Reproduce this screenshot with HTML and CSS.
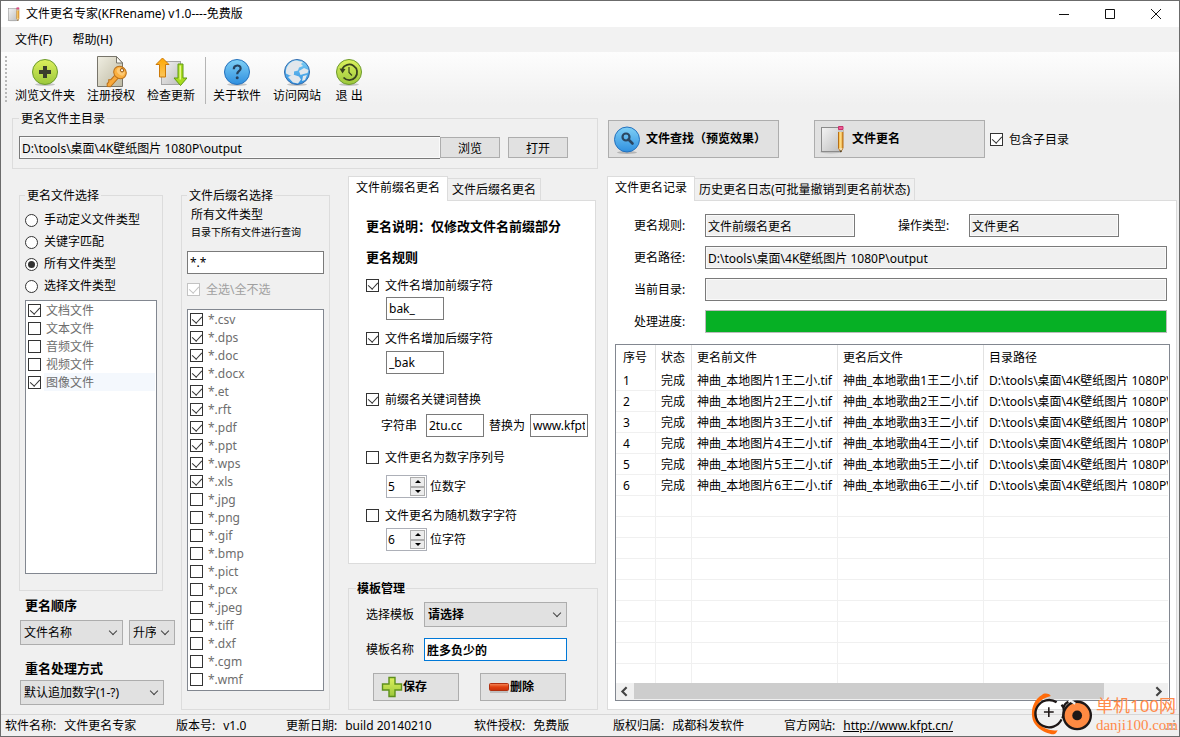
FILE: index.html
```html
<!DOCTYPE html>
<html lang="zh-CN">
<head>
<meta charset="utf-8">
<title>文件更名专家(KFRename) v1.0----免费版</title>
<link rel="stylesheet" href="styles.css">
</head>
<body>
<svg class="defs" aria-hidden="true">
  <defs>
    <linearGradient id="green" x1="0" y1="0" x2="0" y2="1"><stop offset="0" stop-color="#dcf05c"/><stop offset="1" stop-color="#9cc83c"/></linearGradient>
    <linearGradient id="blue" x1="0" y1="0" x2="0" y2="1"><stop offset="0" stop-color="#7fd0f6"/><stop offset="1" stop-color="#2f8fdf"/></linearGradient>
    <linearGradient id="paper" x1="0" y1="0" x2="1" y2="1"><stop offset="0" stop-color="#f4f4f4"/><stop offset="1" stop-color="#bdbdbd"/></linearGradient>
    <linearGradient id="cream" x1="0" y1="0" x2="1" y2="1"><stop offset="0" stop-color="#f0eee2"/><stop offset="1" stop-color="#bdb9a2"/></linearGradient>
    <linearGradient id="orange" x1="0" y1="0" x2="0" y2="1"><stop offset="0" stop-color="#ffa800"/><stop offset="1" stop-color="#fbc55c"/></linearGradient>
    <linearGradient id="wood" x1="0" y1="0" x2="1" y2="0"><stop offset="0" stop-color="#f8b030"/><stop offset=".5" stop-color="#ffe08a"/><stop offset="1" stop-color="#d9861a"/></linearGradient>
    <linearGradient id="red" x1="0" y1="0" x2="0" y2="1"><stop offset="0" stop-color="#f58a5a"/><stop offset=".5" stop-color="#e0400f"/><stop offset="1" stop-color="#c8300a"/></linearGradient>
    <symbol id="notepad" viewBox="0 0 32 32">
      <ellipse cx="14" cy="29" rx="11" ry="1.500" fill="#000" opacity=".15"/>
      <rect x="4.500" y="4.500" width="20" height="24" fill="url(#paper)" stroke="#8b8b8b"/>
      <path d="M21.500 7h4.500v18l-2.200 4-2.300-4z" fill="url(#wood)" stroke="#b56f16"/>
      <path d="M21.500 3.500h4.500v3h-4.500z" fill="#ef5d94" stroke="#c4326c"/>
      <path d="M21 7h5.500v2h-5.500z" fill="#c6c6c6"/>
      <path d="M22 25l1.800 4 1.800-4z" fill="#f5dfb0"/><path d="M22.800 27.500l1 2 1-2z" fill="#222"/>
    </symbol>
  </defs>
</svg>
<div class="window">
  <header class="titlebar">
    <svg class="app-icon" viewBox="0 0 32 32" aria-hidden="true"><use href="#notepad"/></svg>
    <h1 class="title">文件更名专家(KFRename) v1.0----免费版</h1>
    <div class="win-buttons">
      <button class="win-btn" aria-label="最小化"><svg viewBox="0 0 12 12"><path d="M1 6.500h10"/></svg></button>
      <button class="win-btn" aria-label="最大化"><svg viewBox="0 0 12 12"><path d="M1.500 1.500h9v9h-9z"/></svg></button>
      <button class="win-btn" aria-label="关闭"><svg viewBox="0 0 12 12"><path d="M1 1l10 10M11 1L1 11"/></svg></button>
    </div>
  </header>
  <nav class="menubar">
    <button class="menu">文件(F)</button>
    <button class="menu">帮助(H)</button>
  </nav>
  <div class="toolbar">
    <span class="grip"></span>
    <button class="tool">
      <svg viewBox="0 0 32 32"><ellipse cx="16" cy="28.500" rx="10" ry="1.500" fill="#000" opacity=".2"/><circle cx="16" cy="16" r="12.500" fill="url(#green)" stroke="#6c9a2c"/><path d="M14 10h4v4h4v4h-4v4h-4v-4h-4v-4h4z" fill="#3a3f2c"/></svg>
      <span>浏览文件夹</span>
    </button>
    <button class="tool">
      <svg viewBox="0 0 32 32"><path d="M2.500.5h19l6 6.500v23.500h-25z" fill="url(#cream)" stroke="#77746a"/><path d="M21.500.5V7h6z" fill="#fbfaf4" stroke="#77746a"/><g transform="translate(25 16.500) rotate(42)"><path d="M-2 4h4.500v13l-2.500 2-2-2v-2.500l-1.500-1.500 1.500-1.500z" fill="#f9a93a" stroke="#b9701a"/><ellipse cx="0" cy="0" rx="6.500" ry="6" fill="#fbb040" stroke="#b9701a"/><ellipse cx="0" cy="-1" rx="4.500" ry="3" fill="#ffd68a" opacity=".7"/><circle cx="0" cy="-3" r="1.600" fill="#fff" stroke="#9a5a12"/></g></svg>
      <span>注册授权</span>
    </button>
    <button class="tool">
      <svg viewBox="0 0 32 32"><rect x="6.500" y="5.500" width="19" height="23" fill="url(#paper)" stroke="#a5a5a5"/><path d="M7.500 2l6.500 6.500h-3.500V21h-6V8.500H1z" fill="url(#orange)" stroke="#cc7a0a"/><path d="M23 8h5v14h4l-6.500 7.500L19 22h4z" fill="#a9dc1e" stroke="#5f9a12"/><path d="M24.500 9.500h1.500v14h-1.500z" fill="#e6f88c"/></svg>
      <span>检查更新</span>
    </button>
    <span class="tool-sep"></span>
    <button class="tool">
      <svg viewBox="0 0 32 32"><ellipse cx="16" cy="28.500" rx="10" ry="1.500" fill="#000" opacity=".2"/><circle cx="16" cy="16" r="12.500" fill="url(#blue)" stroke="#2471bd"/><path d="M12.800 13.200c0-4.800 6.800-4.800 6.800-.8 0 2.800-3.400 2.800-3.400 5.800" fill="none" stroke="#27425e" stroke-width="2.200"/><circle cx="16.200" cy="21.800" r="1.500" fill="#27425e"/></svg>
      <span>关于软件</span>
    </button>
    <button class="tool">
      <svg viewBox="0 0 32 32"><ellipse cx="16" cy="28.500" rx="10" ry="1.500" fill="#000" opacity=".2"/><circle cx="16" cy="16" r="12.500" fill="url(#blue)" stroke="#2f69ad"/><path d="M5 14c1-5 5-9 10-9.500l7 1.500-2 2 2 2-4 1.500-1 3-4 1v3l-4 1-4-2zM18 15l5-3 4.500 2-1 3-4 1-3 1zM7 21l5-2.500 6 2 2 3-3 4-5-1zM22 20l4-1-2 5-3 1z" fill="#e2e7ec"/></svg>
      <span>访问网站</span>
    </button>
    <button class="tool">
      <svg viewBox="0 0 32 32"><ellipse cx="16" cy="28.500" rx="10" ry="1.500" fill="#000" opacity=".2"/><circle cx="16" cy="16" r="12.500" fill="url(#green)" stroke="#6c9a2c"/><path d="M9.200 13A7.800 7.800 0 1 1 10.500 21.500" fill="none" stroke="#39421f" stroke-width="1.800"/><path d="M6.500 12.500l6 .5-3 4.500z" fill="#39421f"/><path d="M16 11v5.500l3 3" fill="none" stroke="#39421f" stroke-width="1.200"/></svg>
      <span>退 出</span>
    </button>
  </div>

  <main class="body">
    <section class="left">
      <fieldset class="group dir-group">
        <legend>更名文件主目录</legend>
        <div class="dir-row">
          <input class="box grey dir-input" type="text" aria-label="更名文件主目录" value="D:\tools\桌面\4K壁纸图片 1080P\output" readonly>
          <button class="btn small">浏览</button>
          <button class="btn small spaced">打开</button>
        </div>
      </fieldset>

      <div class="columns">
        <div class="col col-types">
          <fieldset class="group types">
            <legend>更名文件选择</legend>
            <label class="radio-row"><input type="radio" name="type">手动定义文件类型</label>
            <label class="radio-row"><input type="radio" name="type">关键字匹配</label>
            <label class="radio-row"><input type="radio" name="type" checked>所有文件类型</label>
            <label class="radio-row"><input type="radio" name="type">选择文件类型</label>
            <div class="list types-list">
              <label class="item"><input type="checkbox" checked><span>文档文件</span></label>
              <label class="item"><input type="checkbox"><span>文本文件</span></label>
              <label class="item"><input type="checkbox"><span>音频文件</span></label>
              <label class="item"><input type="checkbox"><span>视频文件</span></label>
              <label class="item current"><input type="checkbox" checked><span>图像文件</span></label>
            </div>
          </fieldset>
          <h2 class="heading order-heading">更名顺序</h2>
          <div class="order-row">
            <span class="combo order-name"><select aria-label="排序字段"><option>文件名称</option></select></span>
            <span class="combo order-dir"><select aria-label="排序方向"><option>升序</option></select></span>
          </div>
          <h2 class="heading dup-heading">重名处理方式</h2>
          <span class="combo dup-mode"><select aria-label="重名处理方式"><option>默认追加数字(1-?)</option></select></span>
        </div>

        <div class="col">
          <fieldset class="group exts">
            <legend>文件后缀名选择</legend>
            <p class="line">所有文件类型</p>
            <p class="line tiny">目录下所有文件进行查询</p>
            <input class="box pattern" type="text" aria-label="文件后缀名" value="*.*">
            <label class="check all-check disabled"><input type="checkbox" checked disabled><span>全选\全不选</span></label>
            <div class="list ext-list">
              <label class="item"><input type="checkbox" checked><span>*.csv</span></label>
              <label class="item"><input type="checkbox" checked><span>*.dps</span></label>
              <label class="item"><input type="checkbox" checked><span>*.doc</span></label>
              <label class="item"><input type="checkbox" checked><span>*.docx</span></label>
              <label class="item"><input type="checkbox" checked><span>*.et</span></label>
              <label class="item"><input type="checkbox" checked><span>*.rft</span></label>
              <label class="item"><input type="checkbox" checked><span>*.pdf</span></label>
              <label class="item"><input type="checkbox" checked><span>*.ppt</span></label>
              <label class="item"><input type="checkbox" checked><span>*.wps</span></label>
              <label class="item"><input type="checkbox" checked><span>*.xls</span></label>
              <label class="item"><input type="checkbox"><span>*.jpg</span></label>
              <label class="item"><input type="checkbox"><span>*.png</span></label>
              <label class="item"><input type="checkbox"><span>*.gif</span></label>
              <label class="item"><input type="checkbox"><span>*.bmp</span></label>
              <label class="item"><input type="checkbox"><span>*.pict</span></label>
              <label class="item"><input type="checkbox"><span>*.pcx</span></label>
              <label class="item"><input type="checkbox"><span>*.jpeg</span></label>
              <label class="item"><input type="checkbox"><span>*.tiff</span></label>
              <label class="item"><input type="checkbox"><span>*.dxf</span></label>
              <label class="item"><input type="checkbox"><span>*.cgm</span></label>
              <label class="item"><input type="checkbox"><span>*.wmf</span></label>
            </div>
          </fieldset>
        </div>

        <div class="col-rules">
          <div class="tabs" role="tablist">
            <button class="tab active" role="tab" aria-selected="true">文件前缀名更名</button>
            <button class="tab" role="tab" aria-selected="false">文件后缀名更名</button>
          </div>
          <div class="panel rules">
            <h2 class="heading">更名说明：仅修改文件名前缀部分</h2>
            <h2 class="heading rule-heading">更名规则</h2>
            <label class="check rule-first"><input type="checkbox" checked><span>文件名增加前缀字符</span></label>
            <div class="sub after-4"><input class="box short" type="text" aria-label="前缀字符" value="bak_"></div>
            <label class="check rule-second"><input type="checkbox" checked><span>文件名增加后缀字符</span></label>
            <div class="sub after-5"><input class="box short" type="text" aria-label="后缀字符" value="_bak"></div>
            <label class="check rule-third"><input type="checkbox" checked><span>前缀名关键词替换</span></label>
            <div class="replace-row">
              <label for="find">字符串</label><input class="box short" id="find" type="text" value="2tu.cc">
              <label class="to" for="repl">替换为</label><input class="box short" id="repl" type="text" value="www.kfpt.cn">
            </div>
            <label class="check rule-fourth"><input type="checkbox"><span>文件更名为数字序列号</span></label>
            <div class="sub after-10">
              <span class="spin"><input id="digits" type="number" value="5"><span class="spin-btns"><button aria-label="增加"></button><button class="down" aria-label="减少"></button></span></span>
              <label for="digits">位数字</label>
            </div>
            <label class="check rule-fifth"><input type="checkbox"><span>文件更名为随机数字字符</span></label>
            <div class="sub after-5">
              <span class="spin"><input id="chars" type="number" value="6"><span class="spin-btns"><button aria-label="增加"></button><button class="down" aria-label="减少"></button></span></span>
              <label for="chars">位字符</label>
            </div>
          </div>
          <fieldset class="group template">
            <legend>模板管理</legend>
            <div class="tpl-row">
              <label for="tpl">选择模板</label>
              <span class="combo bold"><select id="tpl"><option>请选择</option></select></span>
            </div>
            <div class="tpl-row tpl-name">
              <label for="tplname">模板名称</label>
              <input class="box focus" id="tplname" type="text" value="胜多负少的">
            </div>
            <div class="tpl-buttons">
              <button class="btn bold"><svg viewBox="0 0 22 22"><path d="M8 1.500h6V8h6.500v6H14v6.500H8V14H1.500V8H8z" fill="url(#green)" stroke="#5d8f1c" stroke-width="1.400"/></svg>保存</button>
              <button class="btn bold"><svg viewBox="0 0 22 22"><rect x="2" y="15" width="18" height="2" fill="#000" opacity=".15"/><rect x="1.500" y="7.500" width="19" height="7" rx="1" fill="url(#red)" stroke="#b03010"/></svg>删除</button>
            </div>
          </fieldset>
        </div>
      </div>
    </section>

    <section class="right">
      <div class="actions">
        <button class="btn big"><svg viewBox="0 0 32 32"><ellipse cx="16" cy="29.500" rx="10" ry="1.500" fill="#000" opacity=".2"/><circle cx="16" cy="16.500" r="12.500" fill="url(#blue)" stroke="#2471bd"/><circle cx="15" cy="14" r="3.500" fill="none" stroke="#2a4560" stroke-width="2.200"/><path d="M17.500 16.500l4 4" stroke="#2a4560" stroke-width="2.600" stroke-linecap="round"/></svg>文件查找（预览效果）</button>
        <button class="btn big second"><svg viewBox="0 0 32 32"><use href="#notepad"/></svg>文件更名</button>
        <label class="check sub-dir"><input type="checkbox" checked><span>包含子目录</span></label>
      </div>
      <div class="tabs" role="tablist">
        <button class="tab active" role="tab" aria-selected="true">文件更名记录</button>
        <button class="tab" role="tab" aria-selected="false">历史更名日志(可批量撤销到更名前状态)</button>
      </div>
      <div class="panel log">
        <div class="form">
          <div class="form-row">
            <label for="rule">更名规则:</label><input class="box grey mid" id="rule" type="text" value="文件前缀名更名" readonly>
            <label class="op" for="op">操作类型:</label><input class="box grey mid" id="op" type="text" value="文件更名" readonly>
          </div>
          <div class="form-row"><label for="path">更名路径:</label><input class="box grey wide" id="path" type="text" value="D:\tools\桌面\4K壁纸图片 1080P\output" readonly></div>
          <div class="form-row"><label for="cur">当前目录:</label><input class="box grey wide" id="cur" type="text" readonly></div>
          <div class="form-row"><label for="prog">处理进度:</label><progress class="wide" id="prog" max="100" value="100"></progress></div>
        </div>
        <div class="grid-box">
          <div class="grid-view">
            <table class="grid">
              <colgroup><col class="c-no"><col class="c-state"><col class="c-file"><col class="c-file"><col class="c-path"></colgroup>
              <thead><tr><th>序号</th><th>状态</th><th>更名前文件</th><th>更名后文件</th><th>目录路径</th></tr></thead>
              <tbody>
                <tr><td>1</td><td>完成</td><td>神曲_本地图片1王二小.tif</td><td>神曲_本地歌曲1王二小.tif</td><td>D:\tools\桌面\4K壁纸图片 1080P\output</td></tr>
                <tr><td>2</td><td>完成</td><td>神曲_本地图片2王二小.tif</td><td>神曲_本地歌曲2王二小.tif</td><td>D:\tools\桌面\4K壁纸图片 1080P\output</td></tr>
                <tr><td>3</td><td>完成</td><td>神曲_本地图片3王二小.tif</td><td>神曲_本地歌曲3王二小.tif</td><td>D:\tools\桌面\4K壁纸图片 1080P\output</td></tr>
                <tr><td>4</td><td>完成</td><td>神曲_本地图片4王二小.tif</td><td>神曲_本地歌曲4王二小.tif</td><td>D:\tools\桌面\4K壁纸图片 1080P\output</td></tr>
                <tr><td>5</td><td>完成</td><td>神曲_本地图片5王二小.tif</td><td>神曲_本地歌曲5王二小.tif</td><td>D:\tools\桌面\4K壁纸图片 1080P\output</td></tr>
                <tr><td>6</td><td>完成</td><td>神曲_本地图片6王二小.tif</td><td>神曲_本地歌曲6王二小.tif</td><td>D:\tools\桌面\4K壁纸图片 1080P\output</td></tr>
                <tr><td></td><td></td><td></td><td></td><td></td></tr>
                <tr><td></td><td></td><td></td><td></td><td></td></tr>
                <tr><td></td><td></td><td></td><td></td><td></td></tr>
                <tr><td></td><td></td><td></td><td></td><td></td></tr>
                <tr><td></td><td></td><td></td><td></td><td></td></tr>
                <tr><td></td><td></td><td></td><td></td><td></td></tr>
                <tr><td></td><td></td><td></td><td></td><td></td></tr>
                <tr><td></td><td></td><td></td><td></td><td></td></tr>
                <tr><td></td><td></td><td></td><td></td><td></td></tr>
              </tbody>
            </table>
          </div>
          <div class="hscroll">
            <button aria-label="向左滚动"><svg viewBox="0 0 16 16"><path d="M10 4L6 8l4 4"/></svg></button>
            <span class="track"><span class="thumb"></span></span>
            <button aria-label="向右滚动"><svg viewBox="0 0 16 16"><path d="M6 4l4 4-4 4"/></svg></button>
          </div>
        </div>
      </div>
    </section>
  </main>

  <footer class="statusbar">
    <span class="status"><span>软件名称:</span><span>文件更名专家</span></span>
    <span class="status"><span>版本号:</span><span>v1.0</span></span>
    <span class="status"><span>更新日期:</span><span>build 20140210</span></span>
    <span class="status"><span>软件授权:</span><span>免费版</span></span>
    <span class="status"><span>版权归属:</span><span>成都科发软件</span></span>
    <span class="status"><span>官方网站:</span><a href="http://www.kfpt.cn/">http://www.kfpt.cn/</a></span>
    <svg class="size-grip" viewBox="0 0 11 11" aria-hidden="true"><path d="M8 0h2v2H8zM4 4h2v2H4zM8 4h2v2H8zM0 8h2v2H0zM4 8h2v2H4zM8 8h2v2H8z" fill="#b4b4b4"/></svg>
  </footer>

  <div class="mark">
    <svg viewBox="0 0 64 44" aria-hidden="true">
      <path d="M20 3c-2-3-7-3-9-1C0 8-2 24 4 32c5 7 12 9 16 10 5 1 6-2 7-4-6 1-14-1-18-6C3 23 4 12 11 7c3-2 6-3 9-4z" fill="#ff6b0a"/>
      <path d="M26 9.500A14 14 0 1 0 31 27" fill="none" stroke="#1d1717" stroke-width="2.400"/>
      <path d="M31 12c3 3 3 8 1 14M33 15c1-4 3-5 5-6" fill="none" stroke="#1d1717" stroke-width="2.400"/>
      <circle cx="47" cy="23" r="14" fill="#ff8a42" stroke="#1d1717" stroke-width="2.400"/>
      <path d="M39 7l6 4" stroke="#f0f0f0" stroke-width="2.400"/>
      <circle cx="47" cy="23" r="5" fill="#1d1717"/>
      <path d="M18 14.500v10M13 19.500h10" stroke="#1d1717" stroke-width="1.600"/>
    </svg>
    <span class="mark-text"><span class="mark-name">单机100网</span><span class="mark-url">danji100.com</span></span>
  </div>
</div>
</body>
</html>
```
FILE: styles.css
```css
* { box-sizing: border-box; }

body {
  margin: 0;
  background: #f0f0f0;
  color: #000;
  font: 12px/16px "Noto Sans", "Noto Sans CJK SC", sans-serif;
}

button, input, select { font: inherit; color: inherit; margin: 0; }
button { cursor: default; }
p, h1, h2 { margin: 0; font-size: inherit; font-weight: normal; }
svg { display: block; flex: none; }
.defs { position: absolute; width: 0; height: 0; }

.window {
  position: relative;
  display: flex;
  flex-direction: column;
  min-height: 100vh;
  border: 1px solid #6b6b6b;
}

/* title, menu and tool bars */
.titlebar { display: flex; align-items: center; height: 26px; background: #fff; padding-left: 5px; }
.app-icon { width: 16px; height: 16px; margin-right: 4px; }
.title { flex: 1; }
.win-buttons { display: flex; }
.win-btn { width: 46px; height: 26px; border: 0; background: none; padding: 0; display: grid; place-items: center; }
.win-btn svg { width: 12px; height: 12px; fill: none; stroke: #111; }

.menubar { display: flex; height: 25px; padding-left: 6px; gap: 4px; background: #f2f2f2; }
.menu { border: 0; background: none; padding: 1px 8px 0; }

.toolbar { display: flex; height: 53px; padding: 3px 0 1px 4px; gap: 12px; background: linear-gradient(#fdfdfd, #f0f0f0); }
.grip { width: 2px; margin: 1px -4px 1px 0; background: repeating-linear-gradient(#b8b8b8 0 2px, transparent 2px 4px); }
.tool { border: 0; background: none; padding: 1px 0 0; display: flex; flex-direction: column; align-items: center; white-space: nowrap; }
.tool svg { width: 32px; height: 32px; }
.tool-sep { width: 1px; margin: 2px -5px 0 -2px; background: #b5b5b5; }

/* shared controls */
.group { margin: 0; min-width: 0; border: 1px solid #dcdcdc; padding: 0 6px; }
.group legend { padding: 1px 2px 0; line-height: 15px; }

.box { height: 23px; min-width: 0; border: 1px solid #7a7a7a; padding: 0 2px; background: #fff; outline: 0; border-radius: 0; }
.box.grey { background: #f0f0f0; box-shadow: inset 0 0 0 1px #fafafa; }
.box.focus { border-color: #0078d7; font-weight: bold; }
.box.short { width: 58px; }

.btn { border: 1px solid #adadad; background: #e1e1e1; padding: 0; display: flex; align-items: center; justify-content: center; white-space: nowrap; }
.bold { font-weight: bold; }
.btn.small { width: 60px; height: 21px; padding-top: 2px; }

input[type="checkbox"], input[type="radio"] {
  appearance: none;
  flex: none;
  position: relative;
  width: 13px;
  height: 13px;
  border: 1px solid #333;
  background: #fff;
}
input[type="radio"] { border-radius: 50%; }
input[type="checkbox"]:checked::before {
  content: "";
  position: absolute;
  left: 3px;
  top: 0;
  width: 5px;
  height: 8px;
  border: solid #333;
  border-width: 0 1px 1px 0;
  transform: rotate(42deg);
}
input[type="radio"]:checked::before {
  content: "";
  position: absolute;
  inset: 2px;
  border-radius: 50%;
  background: #333;
}
input[type="checkbox"]:disabled, input[type="checkbox"]:disabled::before { border-color: #c3c3c3; }

.check { display: flex; align-items: center; gap: 6px; height: 16px; white-space: nowrap; }
.check span { padding-top: 1px; }
.check.disabled { color: #a0a0a0; }

.combo { position: relative; display: block; height: 25px; }
.combo select {
  appearance: none;
  width: 100%;
  height: 100%;
  border: 1px solid #adadad;
  border-radius: 0;
  background: #e1e1e1;
  padding: 0 18px 0 3px;
}
.combo::after {
  content: "";
  position: absolute;
  right: 7px;
  top: 8px;
  width: 5px;
  height: 5px;
  border: solid #444;
  border-width: 0 1px 1px 0;
  transform: rotate(45deg);
}

.heading { font-size: 13px; font-weight: bold; }

.list { border: 1px solid #828790; background: #fff; color: #6d6d6d; padding: 0 1px 2px; }
.item { display: flex; align-items: center; height: 18px; padding-left: 1px; gap: 3px; }
.item span { flex: 1; padding: 1px 0 0 2px; }
.item.current span { background: #f4f8fd; line-height: 17px; }

.tabs { display: flex; align-items: flex-end; height: 24px; }
.tab { height: 22px; border: 1px solid #dcdcdc; border-bottom: 0; border-left: 0; background: #f0f0f0; padding: 1px 4px 0; white-space: nowrap; }
.tab.active { position: relative; height: 25px; margin-bottom: -1px; border-left: 1px solid #dcdcdc; background: #fff; padding: 0 7px 2px; }
.panel { border: 1px solid #dcdcdc; background: #fff; }

/* layout */
.body { flex: 1; display: flex; gap: 9px; padding: 5px 2px 4px 11px; }
.left { flex: none; width: 586px; display: flex; flex-direction: column; gap: 7px; }
.dir-group { padding: 10px 6px 9px; }
.dir-row { display: flex; align-items: center; }
.dir-input { flex: 1; border-right: 0; }
.btn.spaced { margin: 0 23px 0 8px; }

.columns { flex: 1; display: grid; grid-template-columns: 145px 150px 250px; column-gap: 17px; padding-left: 7px; }
.col { display: flex; flex-direction: column; padding-top: 11px; }
.col-types { padding-bottom: 5px; }
.types { flex: 1; display: flex; flex-direction: column; width: 144px; padding: 6px 5px 16px; }
.radio-row { display: flex; align-items: center; gap: 6px; height: 22px; white-space: nowrap; }
.types-list { flex: 1; margin-top: 3px; }
.order-heading { margin: 6px 0 7px 6px; }
.order-row { display: flex; gap: 6px; padding-left: 1px; }
.order-name { flex: none; width: 103px; }
.order-dir { flex: none; width: 46px; }
.dup-heading { margin: 15px 0 4px 6px; }
.dup-mode { margin-left: 1px; }

.exts { flex: 1; display: flex; flex-direction: column; width: 149px; padding: 4px 5px 18px; }
.line { margin: 0 0 1px 4px; }
.tiny { font-size: 10px; }
.pattern { margin-top: 10px; }
.all-check { margin: 7px 0 12px; }
.ext-list { flex: 1; }

.col-rules { display: flex; flex-direction: column; }
.rules { width: 248px; padding: 17px 7px 12px 17px; }
.rule-heading { margin-top: 15px; }
.rule-first { margin-top: 12px; }
.rule-second { margin-top: 10px; }
.rule-third { margin-top: 17px; }
.rule-fourth { margin-top: 12px; }
.rule-fifth { margin-top: 9px; }
.sub { display: flex; align-items: center; gap: 3px; padding-left: 20px; }
.after-4 { margin-top: 4px; }
.after-5 { margin-top: 5px; }
.after-10 { margin-top: 10px; }
.replace-row { display: grid; grid-template-columns: 45px 58px 46px 58px; align-items: center; margin-top: 7px; padding-left: 15px; white-space: nowrap; }
.to { padding-left: 5px; }

.spin { display: flex; width: 41px; height: 23px; border: 1px solid #adb0b8; background: #fff; padding: 1px; }
.spin input { appearance: textfield; flex: 1; min-width: 0; border: 0; padding: 0; outline: 0; }
.spin input::-webkit-inner-spin-button { appearance: none; display: none; }
.spin-btns { display: flex; flex-direction: column; width: 15px; }
.spin-btns button { flex: 1; display: grid; place-items: center; border: 1px solid #adadad; background: #ececec; padding: 0; }
.spin-btns button::before { content: ""; border: 3px solid transparent; border-top: 0; border-bottom-color: #000; }
.spin-btns .down::before { border: 3px solid transparent; border-bottom: 0; border-top-color: #000; }

.template { margin-top: 16px; padding: 6px 7px 8px; }
.template legend { font-weight: bold; padding: 1px 1px 0; }
.tpl-row { display: grid; grid-template-columns: 58px 143px; align-items: center; padding-left: 10px; }
.tpl-name { margin: 11px 0 12px; }
.tpl-buttons { display: flex; gap: 21px; padding-left: 17px; }
.tpl-buttons .btn { width: 86px; height: 28px; justify-content: flex-start; padding-left: 7px; }
.tpl-buttons svg { width: 22px; height: 22px; }

.right { flex: 1; min-width: 0; display: flex; flex-direction: column; padding-top: 10px; }
.actions { display: flex; align-items: center; margin: 0 0 18px 1px; }
.btn.big { width: 171px; height: 38px; justify-content: flex-start; gap: 3px; padding-left: 2px; font-weight: bold; }
.btn.big svg { width: 32px; height: 32px; }
.btn.second { margin: 0 5px 0 35px; }

.log { flex: 1; display: flex; flex-direction: column; padding: 13px 6px 8px 7px; }
.form { display: flex; flex-direction: column; gap: 9px; padding: 0 3px 0 19px; margin-bottom: 11px; }
.form-row { display: flex; align-items: center; }
.form-row label { flex: none; width: 71px; }
.form-row .op { margin-left: 43px; }
.mid { width: 150px; }
.wide { flex: 1; }
progress { appearance: none; height: 23px; border: 1px solid #bcbcbc; }
progress::-webkit-progress-bar { background: #e6e6e6; }
progress::-webkit-progress-value { background: #06b025; }

.grid-box { flex: 1; display: flex; flex-direction: column; border: 1px solid #828790; padding-right: 1px; }
.grid-view { flex: 1 1 0; min-height: 0; overflow: hidden; contain: size; }
.grid { width: 640px; table-layout: fixed; border-collapse: separate; border-spacing: 0; }
.c-no { width: 40px; }
.c-state { width: 36px; }
.c-file { width: 146px; }
.grid th, .grid td { height: 21px; padding: 2px 0 0 5px; border-right: 1px solid #f0f0f0; border-bottom: 1px solid #f0f0f0; font-weight: normal; text-align: left; white-space: nowrap; }
.grid th { height: 25px; padding-top: 0; border-right-color: #e2e2e2; border-bottom: 0; }
.grid th:first-child, .grid td:first-child { padding-left: 7px; }

.hscroll { display: flex; height: 17px; background: #f0f0f0; }
.hscroll button { width: 18px; border: 0; background: none; padding: 0; }
.hscroll svg { width: 17px; height: 17px; fill: none; stroke: #444; stroke-width: 2; }
.track { flex: 1; display: flex; padding-bottom: 1px; }
.thumb { width: 91%; background: #cdcdcd; }

.statusbar {
  display: grid;
  grid-template-columns: 171px 110px 188px 139px 171px 1fr 11px;
  align-items: center;
  height: 22px;
  padding: 0 3px 0 4px;
  border-top: 1px solid #d7d7d7;
  white-space: nowrap;
}
.status { display: flex; gap: 8px; }
.status a { color: #000; }
.size-grip { width: 11px; height: 11px; }

/* site mark over the lower right corner */
.mark { position: absolute; right: 1px; bottom: 0; display: flex; align-items: center; gap: 2px; color: #ff8a4a; }
.mark svg { width: 63px; height: 43px; }
.mark-text { display: flex; flex-direction: column; }
.mark-name { font-size: 17px; line-height: 20px; }
.mark-url { font: 15px/18px "Liberation Serif", serif; }
```
